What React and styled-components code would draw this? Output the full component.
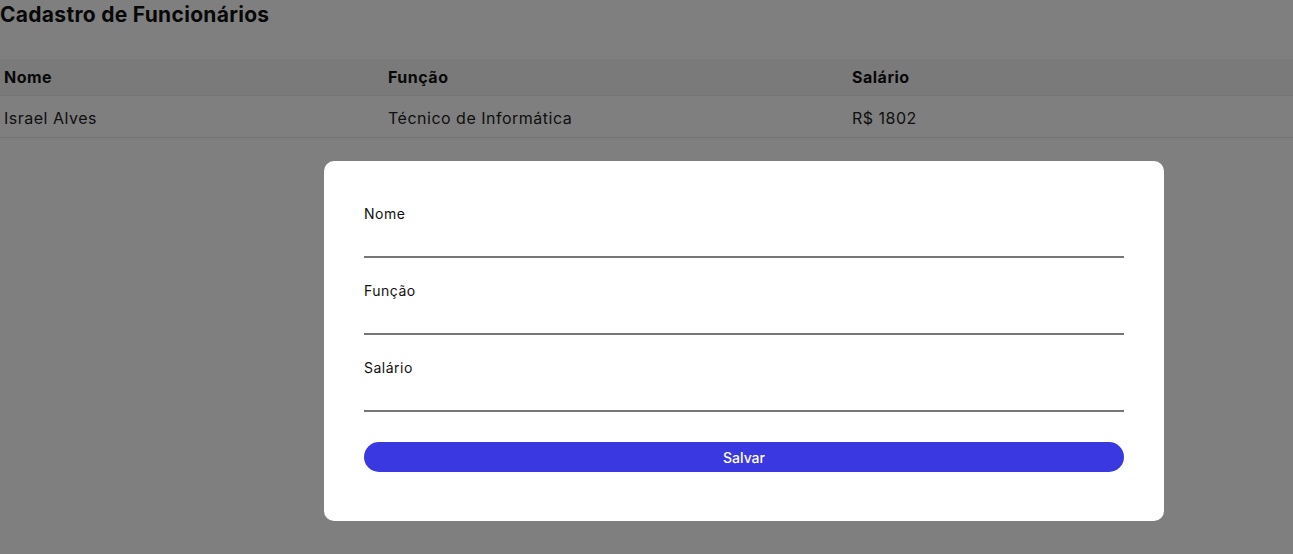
import React from 'react';
import styled, { createGlobalStyle } from 'styled-components';

const GlobalStyle = createGlobalStyle`
  * { box-sizing: border-box; }
  body {
    margin: 0;
    background: #ffffff;
    font-family: Inter, "Open Sans", sans-serif;
    color: #111;
  }
`;

const employees = [
  { id: 1, nome: 'Israel Alves', funcao: 'Técnico de Informática', salario: 1802 },
];

const fields = ['Nome', 'Função', 'Salário'];

export default function App() {
  return (
    <>
      <GlobalStyle />
      <Page>
        <Title>Cadastro de Funcionários</Title>
        <Table>
          <thead>
            <HeadRow>
              <HeadCell $width={384}>Nome</HeadCell>
              <HeadCell $width={464}>Função</HeadCell>
              <HeadCell>Salário</HeadCell>
            </HeadRow>
          </thead>
          <tbody>
            {employees.map(e => (
              <Row key={e.id}>
                <Cell>{e.nome}</Cell>
                <Cell>{e.funcao}</Cell>
                <Cell>R$ {e.salario}</Cell>
              </Row>
            ))}
          </tbody>
        </Table>
      </Page>
      <Overlay>
        <Modal>
          {fields.map(f => (
            <Field key={f}>
              <Label>{f}</Label>
              <Input type="text" />
            </Field>
          ))}
          <Button>Salvar</Button>
        </Modal>
      </Overlay>
    </>
  );
}

const Page = styled.div`
  height: 554px;
`;

const Title = styled.h1`
  margin: 0 0 29px;
  font-size: 21px;
  line-height: 30px;
  font-weight: 700;
  letter-spacing: 0.3px;
`;

const Table = styled.table`
  width: 100%;
  border-collapse: collapse;
  table-layout: fixed;
`;

const HeadRow = styled.tr`
  background: #f4f4f4;
  border-bottom: 1px solid #eaeaea;
`;

const HeadCell = styled.th`
  width: ${p => (p.$width ? `${p.$width}px` : 'auto')};
  height: 36px;
  padding: 0 4px;
  text-align: left;
  font-size: 16px;
  font-weight: 700;
  letter-spacing: 0.5px;
`;

const Row = styled.tr`
  border-bottom: 1px solid #eaeaea;
`;

const Cell = styled.td`
  height: 42px;
  padding: 3px 4px 0;
  font-size: 16px;
  font-weight: 400;
  letter-spacing: 0.5px;
  color: #222;
`;

const Overlay = styled.div`
  position: fixed;
  inset: 0;
  background: rgba(0, 0, 0, 0.5);
  display: flex;
  align-items: flex-start;
  padding: 161px 0 0 324px;
`;

const Modal = styled.form`
  width: 840px;
  height: 360px;
  background: #fff;
  border-radius: 10px;
  padding: 43px 40px 49px;
  display: flex;
  flex-direction: column;
  gap: 23px;
`;

const Field = styled.div`
  display: flex;
  flex-direction: column;
`;

const Label = styled.label`
  font-size: 14px;
  line-height: 20px;
  letter-spacing: 0.5px;
  color: #111;
`;

const Input = styled.input`
  height: 34px;
  border: none;
  border-bottom: 2px solid #777;
  outline: none;
  font: inherit;
  background: transparent;
`;

const Button = styled.button`
  margin-top: 7px;
  height: 30px;
  border: none;
  border-radius: 15px;
  background: #3a38e0;
  color: #fff;
  font-family: inherit;
  font-size: 14px;
  font-weight: 500;
  cursor: pointer;
`;
